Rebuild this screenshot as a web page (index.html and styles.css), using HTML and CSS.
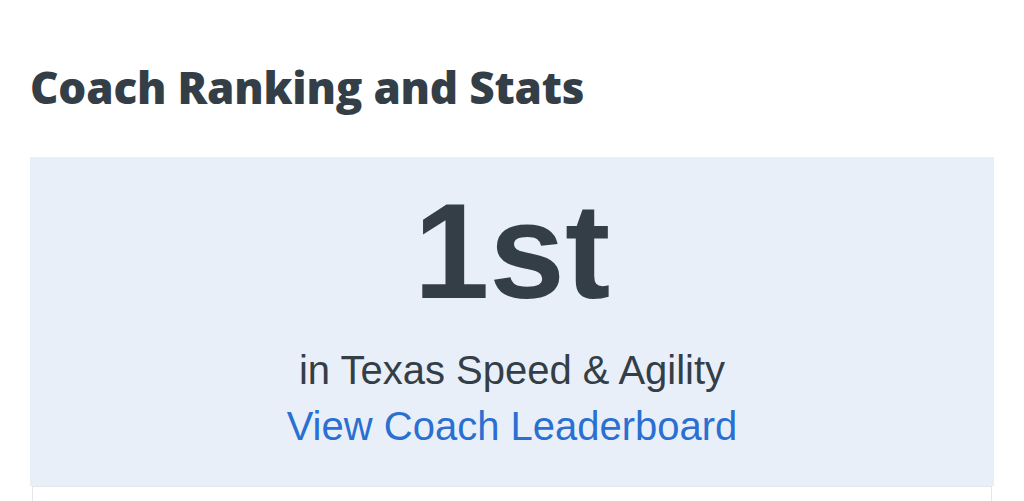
FILE: index.html
```html
<!DOCTYPE html>
<html lang="en">
<head>
  <meta charset="UTF-8" />
  <meta name="viewport" content="width=device-width, initial-scale=1" />
  <title>Coach Ranking and Stats</title>
  <link rel="stylesheet" href="styles.css">
</head>
<body>

<main>
  <h2 class="section-title">Coach Ranking and Stats</h2>

  <section class="rank-box">
    <div class="rank-number">1st</div>
    <div class="rank-label">in Texas Speed &amp; Agility</div>
    <a class="rank-link" href="#">View Coach Leaderboard</a>
  </section>

  <div class="stats-card"></div>
</main>

</body>
</html>
```

FILE: styles.css
```css
body {
  margin: 0;
  background: white;
  font-family: "Liberation Sans", Arial, sans-serif;
  color: #343e47;
}
main {
  padding: 0 30px;
}
.section-title {
  font-family: "Open Sans", sans-serif;
  font-weight: 800;
  font-size: 44px;
  letter-spacing: -0.2px;
  line-height: 1;
  margin: 0;
  padding-top: 65px;
  padding-bottom: 48px;
}
.rank-box {
  background: #e9eff9;
  text-align: center;
  padding: 20px 0 36px;
}
.rank-number {
  font-weight: bold;
  font-size: 136px;
  line-height: 1.1;
}
.rank-label {
  font-size: 40px;
  line-height: 1.2;
  margin-top: 19px;
}
.rank-link {
  display: inline-block;
  font-size: 40px;
  line-height: 1.2;
  margin-top: 8px;
  color: #2a6fd1;
  text-decoration: none;
}
.stats-card {
  margin: 0 2px;
  height: 14px;
  background: white;
  border: 1px solid #e3e6ea;
  border-bottom: none;
}
```
